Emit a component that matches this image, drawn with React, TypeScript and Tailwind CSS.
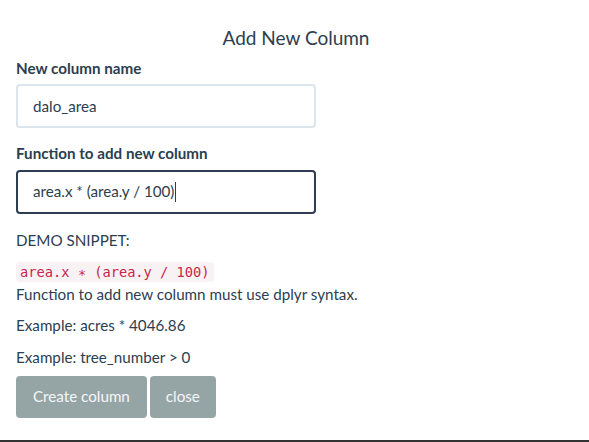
import React from "react";

export default function App() {
  return (
    <div
      className="h-[442px] w-full bg-white border-b-2 border-[#333] text-[#2c3e50] text-[15.2px] leading-[21.43px] overflow-hidden"
      style={{ fontFamily: "Lato, 'Open Sans', sans-serif" }}
    >
      <div className="pt-[24px] text-center text-[19px] leading-[28px] pl-[3px]">Add New Column</div>
      <div className="px-4 mt-[6px]">
        <div className="mb-[15px]">
          <div className="font-bold mb-[5px]">New column name</div>
          <div className="w-[300px] h-[44px] border-2 border-[#dce4ec] rounded-[4px] px-[15px] flex items-center">
            dalo_area
          </div>
        </div>
        <div className="mb-[16px]">
          <div className="font-bold mb-[5px]">Function to add new column</div>
          <div className="w-[300px] h-[44px] border-2 border-[#2c3e50] rounded-[4px] px-[15px] flex items-center">
            <span>area.x * (area.y / 100)</span>
            <span className="inline-block w-px h-[20px] bg-[#2c3e50] ml-[1px]" />
          </div>
        </div>
        <div className="mb-[10px]">DEMO SNIPPET:</div>
        <div>
          <code
            className="text-[13.7px] text-[#c7254e] bg-[#f9f2f4] px-1 py-[2px] rounded-[4px]"
            style={{ fontFamily: "'DejaVu Sans Mono', 'Liberation Mono', monospace" }}
          >
            area.x ∗ (area.y / 100)
          </code>
        </div>
        <div className="mb-[10px]">Function to add new column must use dplyr syntax.</div>
        <div className="mb-[10px]">Example: acres * 4046.86</div>
        <div className="mb-[8px]">Example: tree_number &gt; 0</div>
        <div className="flex gap-[3px]">
          <button className="bg-[#95a5a6] text-white/90 px-[17px] h-[42px] rounded-[4px]">Create column</button>
          <button className="bg-[#95a5a6] text-white/90 px-[16px] h-[42px] rounded-[4px]">close</button>
        </div>
      </div>
    </div>
  );
}
